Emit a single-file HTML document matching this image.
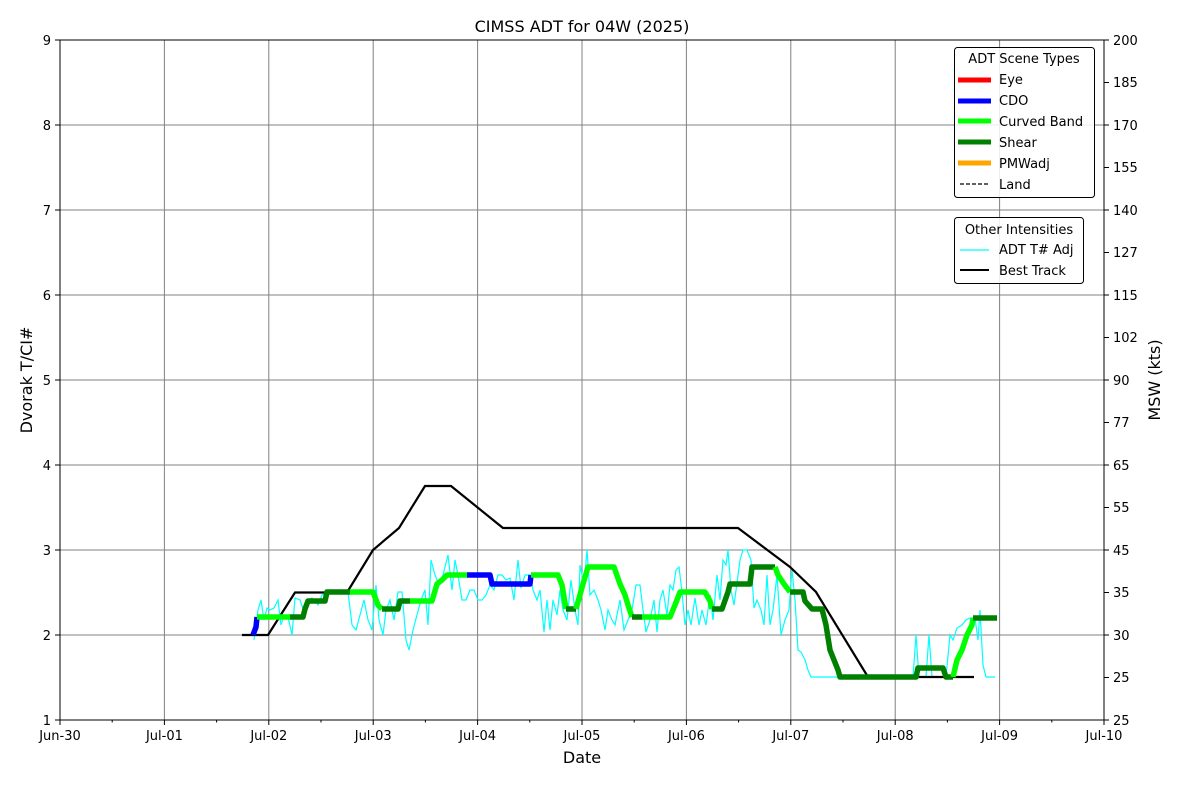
<!DOCTYPE html>
<html><head><meta charset="utf-8"><style>
html,body{margin:0;padding:0;background:#fff;}
svg{display:block;font-family:"DejaVu Sans","Liberation Sans",sans-serif;}
</style></head><body>
<svg width="1200" height="800" viewBox="0 0 1200 800" xmlns="http://www.w3.org/2000/svg">
<rect width="1200" height="800" fill="#fff"/>
<!-- grid -->
<g stroke="#808080" stroke-width="1">
<line x1="164.4" y1="40" x2="164.4" y2="720"/><line x1="268.8" y1="40" x2="268.8" y2="720"/>
<line x1="373.2" y1="40" x2="373.2" y2="720"/><line x1="477.6" y1="40" x2="477.6" y2="720"/>
<line x1="582" y1="40" x2="582" y2="720"/><line x1="686.4" y1="40" x2="686.4" y2="720"/>
<line x1="790.8" y1="40" x2="790.8" y2="720"/><line x1="895.2" y1="40" x2="895.2" y2="720"/>
<line x1="999.6" y1="40" x2="999.6" y2="720"/>
<line x1="60" y1="635" x2="1104" y2="635"/><line x1="60" y1="550" x2="1104" y2="550"/>
<line x1="60" y1="465" x2="1104" y2="465"/><line x1="60" y1="380" x2="1104" y2="380"/>
<line x1="60" y1="295" x2="1104" y2="295"/><line x1="60" y1="210" x2="1104" y2="210"/>
<line x1="60" y1="125" x2="1104" y2="125"/>
</g>
<!-- cyan -->
<polyline fill="none" stroke="#00ffff" stroke-width="1.2" points="254,640 258,610 261,600 264,620 267,608 270,610 274,608 278,600 281,625 284,615 288,617 292,635 295,598 300,600 304,612 308,600 312,598 318,605 322,595 330,592 340,592 348,592 352,625 356,630 360,615 364,600 368,620 372,630 376,585 379,620 383,635 386,610 390,600 394,620 398,592 402,592 406,640 409,650 413,630 417,615 421,600 425,590 428,625 431,560 435,575 439,585 443,575 448,555 452,590 455,560 458,575 462,600 466,600 470,590 474,590 478,600 482,600 486,595 490,585 494,590 498,575 502,575 506,580 510,578 514,600 518,560 521,588 525,575 530,575 533,590 537,600 540,590 544,632 547,600 550,630 553,600 557,615 560,590 563,610 567,620 571,580 575,610 578,625 580,565 584,585 587,550 590,595 594,590 598,600 601,610 605,630 608,610 612,620 615,625 620,600 624,630 628,620 632,610 636,585 640,585 643,610 646,632 650,620 654,600 657,632 660,600 663,590 667,615 670,585 673,590 676,570 679,567 682,592 685,625 688,610 691,625 695,598 699,625 702,610 706,625 710,595 713,620 717,575 720,600 723,560 726,565 728,550 731,590 734,605 737,583 740,560 743,550 747,550 751,560 754,608 757,600 761,610 764,625 767,575 770,625 773,610 777,575 781,635 785,620 789,610 792,570 795,600 798,650 801,652 805,660 808,670 811,677 830,677 880,677 913,677 916,635 919,677 926,677 929,635 932,677 940,677 946,677 950,635 953,640 957,628 962,625 966,620 970,618 975,618 978,640 980,610 983,665 986,677 995,677"/>
<!-- best track -->
<polyline fill="none" stroke="#000" stroke-width="2.2" points="242,635 268,635 295,592.5 347,592.5 373,550 399,528 425,486 451,486 503,528 738,528 790,567 816,592 868,677 974,677"/>
<!-- scene types -->
<g fill="none" stroke-width="5.5" stroke-linejoin="round">
<polyline stroke="#0000ff" points="253,635 256,627 257,617"/>
<polyline stroke="#00ff00" points="257,617 290,617"/>
<polyline stroke="#008000" points="290,617 303,617 305,609 308,601 325,601 327,592 350,592"/>
<polyline stroke="#00ff00" points="350,592 373,592 378,605 382,609"/>
<polyline stroke="#008000" points="382,609 398,609 400,601 410,601"/>
<polyline stroke="#00ff00" points="410,601 432,601 437,584 442,580 447,575 467,575"/>
<polyline stroke="#0000ff" points="467,575 490,575 492,584 530,584 531,575"/>
<polyline stroke="#00ff00" points="531,575 558,575 562,585 566,609"/>
<polyline stroke="#008000" points="566,609 576,609"/>
<polyline stroke="#00ff00" points="576,609 583,584 588,567 614,567 620,584 625,595 628,605 632,617"/>
<polyline stroke="#008000" points="632,617 642,617"/>
<polyline stroke="#00ff00" points="642,617 670,617 675,605 680,592 705,592 710,601 712,609"/>
<polyline stroke="#008000" points="712,609 722,609 728,592 730,584 750,584 752,567 775,567"/>
<polyline stroke="#00ff00" points="775,567 778,575 784,584 790,592"/>
<polyline stroke="#008000" points="790,592 803,592 805,601 812,609 822,609 826,625 830,650 834,660 838,670 840,677 916,677 918,668 943,668 946,677 953,677"/>
<polyline stroke="#00ff00" points="953,677 957,660 962,650 967,635 972,625 973,618"/>
<polyline stroke="#008000" points="973,618 997,618"/>
</g>
<!-- axes box -->
<rect x="60" y="40" width="1044" height="680" fill="none" stroke="#000" stroke-width="1"/>
<!-- ticks -->
<g stroke="#000" stroke-width="1">
<line x1="60" y1="720" x2="60" y2="725"/><line x1="164.4" y1="720" x2="164.4" y2="725"/><line x1="268.8" y1="720" x2="268.8" y2="725"/><line x1="373.2" y1="720" x2="373.2" y2="725"/><line x1="477.6" y1="720" x2="477.6" y2="725"/><line x1="582" y1="720" x2="582" y2="725"/><line x1="686.4" y1="720" x2="686.4" y2="725"/><line x1="790.8" y1="720" x2="790.8" y2="725"/><line x1="895.2" y1="720" x2="895.2" y2="725"/><line x1="999.6" y1="720" x2="999.6" y2="725"/><line x1="1104" y1="720" x2="1104" y2="725"/>
<line x1="112.2" y1="720" x2="112.2" y2="722.5"/><line x1="216.6" y1="720" x2="216.6" y2="722.5"/><line x1="321" y1="720" x2="321" y2="722.5"/><line x1="425.4" y1="720" x2="425.4" y2="722.5"/><line x1="529.8" y1="720" x2="529.8" y2="722.5"/><line x1="634.2" y1="720" x2="634.2" y2="722.5"/><line x1="738.6" y1="720" x2="738.6" y2="722.5"/><line x1="843" y1="720" x2="843" y2="722.5"/><line x1="947.4" y1="720" x2="947.4" y2="722.5"/><line x1="1051.8" y1="720" x2="1051.8" y2="722.5"/>
<line x1="55" y1="720" x2="60" y2="720"/><line x1="55" y1="635" x2="60" y2="635"/><line x1="55" y1="550" x2="60" y2="550"/><line x1="55" y1="465" x2="60" y2="465"/><line x1="55" y1="380" x2="60" y2="380"/><line x1="55" y1="295" x2="60" y2="295"/><line x1="55" y1="210" x2="60" y2="210"/><line x1="55" y1="125" x2="60" y2="125"/><line x1="55" y1="40" x2="60" y2="40"/>
<line x1="1104" y1="720" x2="1109" y2="720"/><line x1="1104" y1="677.5" x2="1109" y2="677.5"/><line x1="1104" y1="635" x2="1109" y2="635"/><line x1="1104" y1="592.5" x2="1109" y2="592.5"/><line x1="1104" y1="550" x2="1109" y2="550"/><line x1="1104" y1="507.5" x2="1109" y2="507.5"/><line x1="1104" y1="465" x2="1109" y2="465"/><line x1="1104" y1="422.5" x2="1109" y2="422.5"/><line x1="1104" y1="380" x2="1109" y2="380"/><line x1="1104" y1="337.5" x2="1109" y2="337.5"/><line x1="1104" y1="295" x2="1109" y2="295"/><line x1="1104" y1="252.5" x2="1109" y2="252.5"/><line x1="1104" y1="210" x2="1109" y2="210"/><line x1="1104" y1="167.5" x2="1109" y2="167.5"/><line x1="1104" y1="125" x2="1109" y2="125"/><line x1="1104" y1="82.5" x2="1109" y2="82.5"/><line x1="1104" y1="40" x2="1109" y2="40"/>
</g>
<g font-size="13" fill="#000">
<g text-anchor="middle">
<text x="60" y="740">Jun-30</text><text x="164.4" y="740">Jul-01</text><text x="268.8" y="740">Jul-02</text><text x="373.2" y="740">Jul-03</text><text x="477.6" y="740">Jul-04</text><text x="582" y="740">Jul-05</text><text x="686.4" y="740">Jul-06</text><text x="790.8" y="740">Jul-07</text><text x="895.2" y="740">Jul-08</text><text x="999.6" y="740">Jul-09</text><text x="1104" y="740">Jul-10</text>
</g>
<g text-anchor="end">
<text x="51" y="725">1</text><text x="51" y="640">2</text><text x="51" y="555">3</text><text x="51" y="470">4</text><text x="51" y="385">5</text><text x="51" y="300">6</text><text x="51" y="215">7</text><text x="51" y="130">8</text><text x="51" y="45">9</text>
</g>
<g>
<text x="1113" y="725">25</text><text x="1113" y="682">25</text><text x="1113" y="640">30</text><text x="1113" y="597">35</text><text x="1113" y="555">45</text><text x="1113" y="512">55</text><text x="1113" y="470">65</text><text x="1113" y="427">77</text><text x="1113" y="385">90</text><text x="1113" y="342">102</text><text x="1113" y="300">115</text><text x="1113" y="257">127</text><text x="1113" y="215">140</text><text x="1113" y="172">155</text><text x="1113" y="130">170</text><text x="1113" y="87">185</text><text x="1113" y="45">200</text>
</g>
</g>
<text x="582" y="32" font-size="16" text-anchor="middle">CIMSS ADT for 04W (2025)</text>
<text x="582" y="763" font-size="16" text-anchor="middle">Date</text>
<text transform="translate(32,380) rotate(-90)" font-size="16" text-anchor="middle">Dvorak T/CI#</text>
<text transform="translate(1160,380) rotate(-90)" font-size="16" text-anchor="middle">MSW (kts)</text>
<!-- legend 1 -->
<rect x="954.5" y="47.5" width="140" height="150" rx="3" fill="#fff" fill-opacity="0.85" stroke="#000" stroke-width="1"/>
<g font-size="13">
<text x="1024" y="63" text-anchor="middle">ADT Scene Types</text>
<line x1="958" y1="80" x2="991" y2="80" stroke="#ff0000" stroke-width="5"/><text x="999" y="84">Eye</text>
<line x1="958" y1="101" x2="991" y2="101" stroke="#0000ff" stroke-width="5"/><text x="999" y="105">CDO</text>
<line x1="958" y1="121" x2="991" y2="121" stroke="#00ff00" stroke-width="5"/><text x="999" y="126">Curved Band</text>
<line x1="958" y1="142" x2="991" y2="142" stroke="#008000" stroke-width="5"/><text x="999" y="147">Shear</text>
<line x1="958" y1="163" x2="991" y2="163" stroke="#ffa500" stroke-width="5"/><text x="999" y="168">PMWadj</text>
<line x1="960" y1="184" x2="989" y2="184" stroke="#000" stroke-width="1.2" stroke-dasharray="4,2"/><text x="999" y="189">Land</text>
</g>
<!-- legend 2 -->
<rect x="954.5" y="217.5" width="129" height="66" rx="3" fill="#fff" fill-opacity="0.85" stroke="#000" stroke-width="1"/>
<g font-size="13">
<text x="1019" y="234" text-anchor="middle">Other Intensities</text>
<line x1="960" y1="250" x2="989" y2="250" stroke="#00ffff" stroke-width="1.2"/><text x="999" y="254">ADT T# Adj</text>
<line x1="960" y1="270" x2="989" y2="270" stroke="#000" stroke-width="2"/><text x="999" y="275">Best Track</text>
</g>
</svg>
</body></html>
